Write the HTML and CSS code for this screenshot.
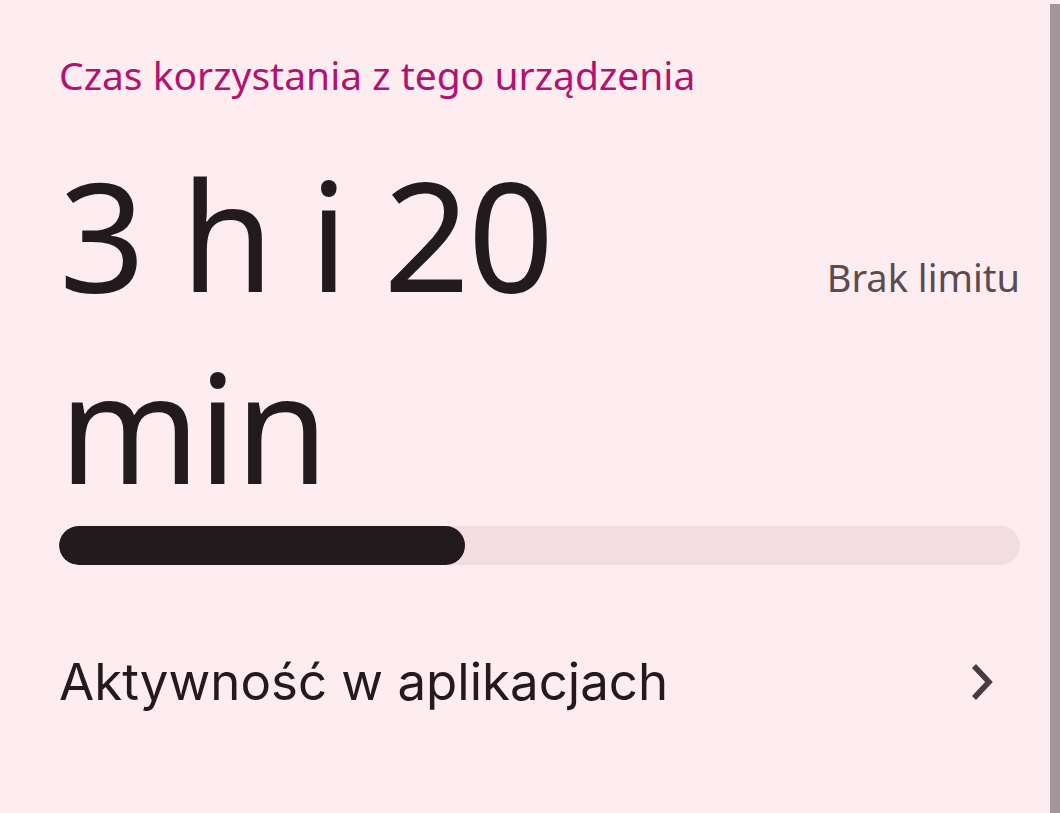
FILE: index.html
```html
<!DOCTYPE html>
<html lang="pl">

<head>
    <meta charset="utf-8">
    <meta name="viewport" content="width=device-width, initial-scale=1.0">
    <title>Czas korzystania z urządzenia</title>
    <link rel="stylesheet" href="styles.css">
</head>

<body>

    <div class="ekran">
        <main class="karta">
            <h1 class="tytul">Czas korzystania z tego urządzenia</h1>

            <div class="czas">
                <p class="suma">3 h i 20 min</p>
                <p class="limit">Brak limitu</p>
            </div>

            <div class="pasek">
                <div class="wypelnienie" style="width: 42.2%"></div>
            </div>

            <a class="wiersz" href="#">
                <span>Aktywność w aplikacjach</span>
                <svg class="strzalka" viewBox="0 0 24 40" width="24" height="40">
                    <path d="M4 4 L19 20 L4 36" fill="none" stroke="#463b3f" stroke-width="5.5" />
                </svg>
            </a>
        </main>
        <div class="suwak"></div>
    </div>

</body>

</html>
```

FILE: styles.css
```css
body {
    margin: 0px;
    background-color: #fdedf0;
    font-family: 'Noto Sans', sans-serif;
    color: #231a1d;
}

.ekran {
    display: flex;
    height: 813px;
    overflow: hidden;
}

.karta {
    flex-grow: 1;
    padding: 49px 30px 0 59px;
}

.tytul {
    margin: 0;
    font-size: 39px;
    font-weight: 400;
    color: #b3126f;
    line-height: 52px;
}

.czas {
    display: flex;
    align-items: baseline;
    justify-content: space-between;
    margin-top: 37px;
}

.suma {
    margin: 0;
    width: 520px;
    font-size: 151px;
    line-height: 192px;
    letter-spacing: -2px;
    color: #231a1d;
}

.limit {
    margin: 0;
    font-size: 38px;
    color: #5a4b50;
}

.pasek {
    height: 39px;
    margin-top: 4px;
    border-radius: 20px;
    background-color: #f2dde2;
    overflow: hidden;
}

.wypelnienie {
    height: 100%;
    border-radius: 20px;
    background-color: #231a1d;
}

.wiersz {
    display: flex;
    align-items: center;
    justify-content: space-between;
    margin-top: 86px;
    padding-right: 26px;
    font-family: 'Inter', sans-serif;
    font-size: 51px;
    color: #231a1d;
    text-decoration: none;
}

.suwak {
    width: 10px;
    margin-top: 4px;
    background-color: #a39599;
}
```
